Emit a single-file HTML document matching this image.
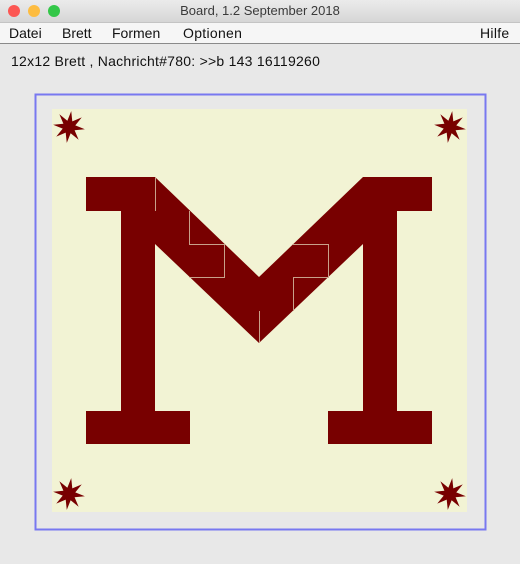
<!DOCTYPE html>
<html><head><meta charset="utf-8"><style>
html,body{margin:0;padding:0}
body{width:520px;height:564px;background:#e8e8e8;font-family:"Liberation Sans","DejaVu Sans",sans-serif;position:relative;overflow:hidden}
.title{position:absolute;left:0;top:0;width:520px;height:22px;background:linear-gradient(#ebebeb,#d6d6d6);border-bottom:1px solid #c4c4c4;text-align:center;font-size:13px;line-height:22px;color:#3a3a3a}
.dot{position:absolute;top:5px;width:12px;height:12px;border-radius:50%}
.menu{position:absolute;left:0;top:23px;width:520px;height:20px;background:#f6f6f6;border-bottom:1px solid #8a8a8a;font-size:14px;line-height:20px;color:#111}
.menu span{position:absolute;top:0}
.info{position:absolute;left:11px;top:53px;font-size:14px;letter-spacing:0.25px;color:#111}
svg{position:absolute;left:0;top:0}
</style></head><body>
<div class="title">Board, 1.2 September 2018
<div class="dot" style="left:8px;background:#fc5753"></div>
<div class="dot" style="left:28px;background:#fdbc40"></div>
<div class="dot" style="left:48px;background:#33c748"></div>
</div>
<div class="menu"><span style="left:9px">Datei</span><span style="left:62px">Brett</span><span style="left:112px">Formen</span><span style="left:183px;letter-spacing:0.3px">Optionen</span><span style="left:480px;letter-spacing:0.3px">Hilfe</span></div>
<div class="info">12x12 Brett , Nachricht#780: &gt;&gt;b 143 16119260</div>
<svg width="520" height="564" viewBox="0 0 520 564">
<rect x="35.5" y="94.5" width="450" height="435" fill="none" stroke="#7878f0" stroke-width="2"/>
<rect x="52" y="109" width="415" height="403" fill="#f2f3d4"/>
<polygon fill="#780000" points="86,177 155,177 259,277 363,177 432,177 432,211 397,211 397,411 432,411 432,444 328,444 328,411 363,411 363,244 259,343 155,244 155,411 190,411 190,444 86,444 86,411 121,411 121,211 86,211"/>
<g stroke="#c8a08a" stroke-width="1" fill="none">
<path d="M155.5 177V211M189.5 211V244.5H224.5V277.5H189.5M293 244.5H328.5V277.5H293.5V311M259.5 311V343"/>
</g>
<g fill="#780000">
<path d="M0,-16 L2.5,-6 L11.3,-11.3 L6,-2.5 L16,0 L6,2.5 L11.3,11.3 L2.5,6 L0,16 L-2.5,6 L-11.3,11.3 L-6,2.5 L-16,0 L-6,-2.5 L-11.3,-11.3 L-2.5,-6Z" transform="translate(69,127) rotate(8)"/>
<path d="M0,-16 L2.5,-6 L11.3,-11.3 L6,-2.5 L16,0 L6,2.5 L11.3,11.3 L2.5,6 L0,16 L-2.5,6 L-11.3,11.3 L-6,2.5 L-16,0 L-6,-2.5 L-11.3,-11.3 L-2.5,-6Z" transform="translate(450,127) rotate(8)"/>
<path d="M0,-16 L2.5,-6 L11.3,-11.3 L6,-2.5 L16,0 L6,2.5 L11.3,11.3 L2.5,6 L0,16 L-2.5,6 L-11.3,11.3 L-6,2.5 L-16,0 L-6,-2.5 L-11.3,-11.3 L-2.5,-6Z" transform="translate(69,494) rotate(8)"/>
<path d="M0,-16 L2.5,-6 L11.3,-11.3 L6,-2.5 L16,0 L6,2.5 L11.3,11.3 L2.5,6 L0,16 L-2.5,6 L-11.3,11.3 L-6,2.5 L-16,0 L-6,-2.5 L-11.3,-11.3 L-2.5,-6Z" transform="translate(450,494) rotate(8)"/>
</g>
</svg>
</body></html>
